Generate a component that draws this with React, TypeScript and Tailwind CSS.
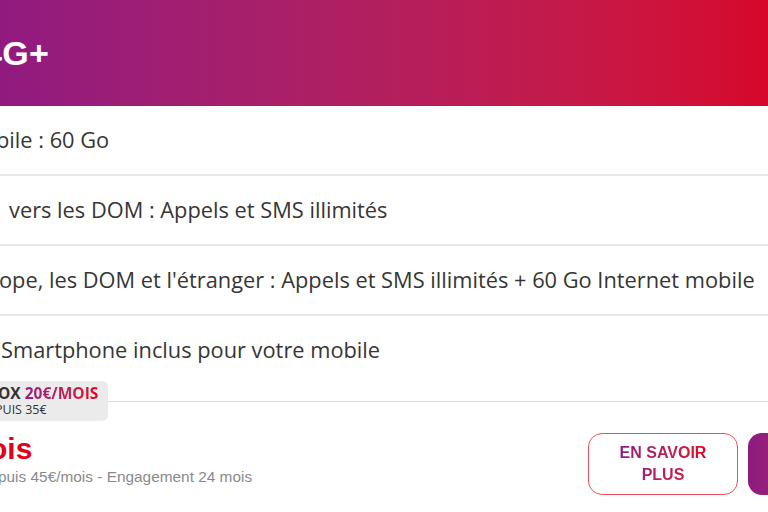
import React from "react";

const rows = [
  { text: "bile : 60 Go", shift: "-ml-[4px]" },
  { text: "vers les DOM : Appels et SMS illimités", shift: "ml-[9px]" },
  { text: "ope, les DOM et l'étranger : Appels et SMS illimités + 60 Go Internet mobile", shift: "-ml-[1px]" },
];

export default function App() {
  return (
    <div className="w-[768px] h-[512px] overflow-hidden bg-white flex flex-col" style={{ fontFamily: "'Open Sans', sans-serif" }}>
      <header className="h-[106px] shrink-0 flex items-center bg-gradient-to-r from-[#911a80] to-[#d7062a]">
        <h1 className="-ml-[17px] text-white font-bold text-[34px] leading-none tracking-[0.3px]" style={{ fontFamily: "'Liberation Sans', Arial, sans-serif" }}>
          4G+
        </h1>
      </header>

      {rows.map((r, i) => (
        <div key={i} className="h-[70px] shrink-0 flex items-center border-b-2 border-[#e8e8e8]">
          <span className={`${r.shift} whitespace-nowrap text-[21.8px] text-[#363636]`}>{r.text}</span>
        </div>
      ))}

      <div className="h-[65px] shrink-0 pt-[20px]">
        <span className="ml-[1px] whitespace-nowrap text-[21.8px] leading-[28px] text-[#363636]">Smartphone inclus pour votre mobile</span>
      </div>

      <div className="flex items-center shrink-0">
        <div className="-ml-[20px] h-[40px] w-[128px] shrink-0 rounded-md bg-[#ebebeb] flex flex-col justify-center pl-[18px]">
          <div className="whitespace-nowrap text-[15.5px] font-bold leading-[18px] text-[#333333]">
            OX{" "}
            <span className="bg-gradient-to-r from-[#961b80] to-[#e2001a] bg-clip-text text-transparent">20€/MOIS</span>
          </div>
          <div className="-ml-[3px] whitespace-nowrap text-[12.5px] leading-[16px] text-[#333333]">PUIS 35€</div>
        </div>
        <div className="flex-1 h-px bg-[#dddddd]" />
      </div>

      <div className="flex items-start pt-[12px]">
        <div className="flex-1 flex flex-col">
          <div className="-ml-[11px] text-[30px] font-bold leading-[32px] text-[#e2001a]" style={{ fontFamily: "'Liberation Sans', Arial, sans-serif" }}>
            ois
          </div>
          <div className="-ml-[2px] mt-[3px] whitespace-nowrap text-[15.4px] leading-[18px] text-[#8a8a8a]" style={{ fontFamily: "'Liberation Sans', Arial, sans-serif" }}>
            puis 45€/mois - Engagement 24 mois
          </div>
        </div>
        <div className="flex gap-[10px] shrink-0 -mr-[130px]">
          <button className="w-[150px] h-[62px] rounded-[14px] border border-[#e9505e] bg-white flex items-center justify-center">
            <span
              className="text-[16px] font-bold leading-[22px] text-center bg-gradient-to-r from-[#8d1b80] to-[#e2001a] bg-clip-text text-transparent"
              style={{ fontFamily: "'Liberation Sans', Arial, sans-serif" }}
            >
              EN SAVOIR
              <br />
              PLUS
            </span>
          </button>
          <button className="w-[150px] h-[62px] rounded-[14px] bg-gradient-to-r from-[#8d1b80] to-[#d7062a]" />
        </div>
      </div>
    </div>
  );
}
